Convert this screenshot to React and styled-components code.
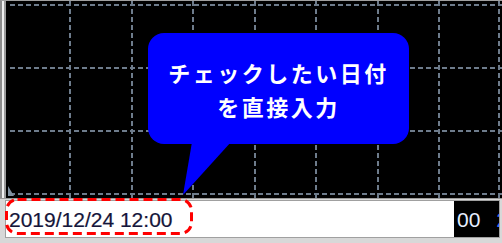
import React from "react";
import styled, { createGlobalStyle } from "styled-components";

const GlobalStyle = createGlobalStyle`
  html, body {
    margin: 0;
    padding: 0;
    background: #d8d8d8;
  }
`;

const Frame = styled.div`
  position: relative;
  width: 502px;
  height: 243px;
  display: flex;
  flex-direction: column;
  background: #d8d8d8;
  overflow: hidden;
  font-family: "Liberation Sans", Arial, sans-serif;
`;

const Chart = styled.div`
  display: flex;
  height: 197px;
  border-top: 1px solid #a0a0a0;
  border-left: 2px solid #8c8c8c;
  box-shadow: inset 2px 0 0 #f0f0f0, inset 4px 0 0 #9a9a9a;
  padding-left: 5px;
  background: #000;
`;

const Canvas = styled.div`
  flex: 1;
  background: #000;
  svg {
    display: block;
  }
`;

const BottomBar = styled.div`
  display: flex;
  height: 38px;
  padding: 1px 2px 5px 5px;
  border-top: 1px solid #9a9a9a;
  background: #d8d8d8;
`;

const DateInput = styled.div`
  flex: 1;
  display: flex;
  align-items: center;
  padding: 1px 0 0 3px;
  background: #fff;
  border: 1px solid #a0a0a0;
  border-right: none;
  font-size: 21px;
  color: #15153a;
  -webkit-text-stroke: 0.2px #15153a;
  white-space: nowrap;
`;

const SideBox = styled.div`
  width: 42px;
  display: flex;
  align-items: center;
  gap: 16px;
  padding: 1px 0 0 3px;
  background: #000;
  border: 1px solid #a0a0a0;
  border-left: none;
  font-size: 21px;
  color: #e6eeff;
  overflow: hidden;
  white-space: nowrap;
`;

const Digit = styled.span`
  color: ${({ $tone }) => $tone || "inherit"};
`;

const Bubble = styled.div`
  position: absolute;
  left: 148px;
  top: 33px;
  width: 261px;
  height: 111px;
  box-sizing: border-box;
  padding-top: 22px;
  border-radius: 16px;
  background: #0000ff;
  color: #fff;
  text-align: center;
  font-family: "Noto Sans CJK JP", "Noto Sans", sans-serif;
  font-weight: 700;
  font-size: 22px;
  line-height: 34px;
  letter-spacing: 2.5px;
`;

const Overlay = styled.svg`
  position: absolute;
  left: 0;
  top: 0;
  pointer-events: none;
`;

const xs = [63, 125, 186, 248, 309, 371, 432, 492];
const ys = [4, 67, 130, 193];

const Grid = () => (
  <svg width="495" height="197">
    <g stroke="#6e7c8c" strokeWidth="2" strokeDasharray="5 3" fill="none">
      {ys.map((y) => (
        <line key={"h" + y} x1="3" y1={y} x2="495" y2={y} />
      ))}
      {xs.map((x) => (
        <line key={"v" + x} x1={x} y1="0" x2={x} y2="197" />
      ))}
    </g>
    <polygon points="1,185 1,195 7,195" fill="#8090a0" />
  </svg>
);

export default function App() {
  return (
    <>
      <GlobalStyle />
      <Frame>
        <Chart>
          <Canvas>
            <Grid />
          </Canvas>
        </Chart>
        <BottomBar>
          <DateInput>2019/12/24 12:00</DateInput>
          <SideBox>
            <Digit>00</Digit>
            <Digit $tone="#2f6bff">2</Digit>
          </SideBox>
        </BottomBar>
        <Overlay width="502" height="243">
          <polygon points="192,142 231,142 183,195" fill="#0000ff" />
          <rect
            x="6.5"
            y="199.5"
            width="185"
            height="34"
            rx="11"
            fill="none"
            stroke="#ff0000"
            strokeWidth="3"
            strokeDasharray="9 5"
          />
        </Overlay>
        <Bubble>
          チェックしたい日付
          <br />
          を直接入力
        </Bubble>
      </Frame>
    </>
  );
}
